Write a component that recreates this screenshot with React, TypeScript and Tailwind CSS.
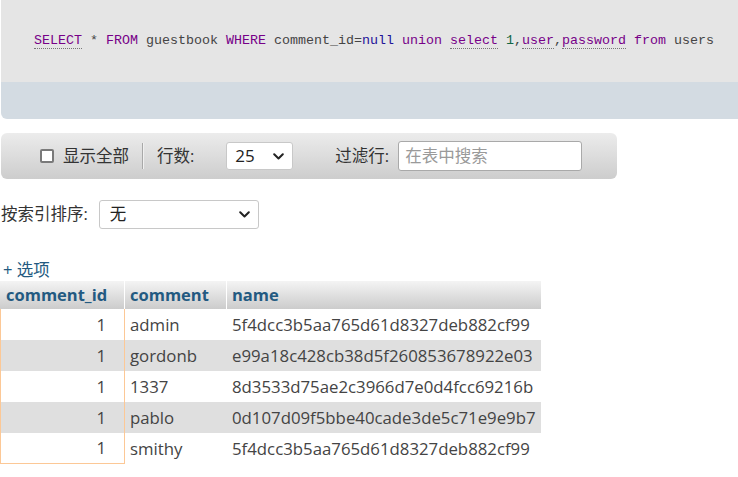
import React from "react";

const font = { fontFamily: '"Open Sans", "Noto Sans CJK SC", sans-serif' };

function Chevron() {
  return (
    <svg width="11" height="7" viewBox="0 0 11 7" fill="none">
      <path d="M1.2 1.2l4.3 4.3 4.3-4.3" stroke="#222" strokeWidth="2" strokeLinecap="round" strokeLinejoin="round" />
    </svg>
  );
}

const rows = [
  ["1", "admin", "5f4dcc3b5aa765d61d8327deb882cf99"],
  ["1", "gordonb", "e99a18c428cb38d5f260853678922e03"],
  ["1", "1337", "8d3533d75ae2c3966d7e0d4fcc69216b"],
  ["1", "pablo", "0d107d09f5bbe40cade3de5c71e9e9b7"],
  ["1", "smithy", "5f4dcc3b5aa765d61d8327deb882cf99"],
];

export default function App() {
  const kw = "text-[#770088]";
  const dot = "border-b border-dotted border-[#777]";
  return (
    <div className="w-[738px] h-[477px] overflow-hidden bg-white text-[#444]" style={font}>
      {/* SQL box */}
      <div className="ml-[1px] rounded-bl-[6px] overflow-hidden">
        <div className="h-[82px] bg-[#e5e5e5] flex items-center pl-[33px]">
          <pre className="text-[13.33px] leading-[16px] text-[#444] whitespace-pre" style={{ fontFamily: '"Liberation Mono", monospace' }}>
            <span className={`${kw} ${dot}`}>SELECT</span> * <span className={kw}>FROM</span> guestbook <span className={kw}>WHERE</span> comment_id=<span className="text-[#221199]">null</span> <span className={kw}>union</span> <span className={`${kw} ${dot}`}>select</span> <span className="text-[#116644]">1</span>,<span className={`${kw} ${dot}`}>user</span>,<span className={`${kw} ${dot}`}>password</span> <span className={kw}>from</span> users
          </pre>
        </div>
        <div className="h-[37px] bg-[#d3dbe2]" />
      </div>

      {/* Toolbar */}
      <div className="mt-[14px] ml-[1px] w-[616px] h-[46px] rounded-[6px] bg-gradient-to-b from-[#ececec] to-[#cdcdcd] flex items-center text-[16.5px] text-[#333]">
        <div className="ml-[39px] w-[14px] h-[14px] border-2 border-[#7a7a7a] rounded-[2px] bg-white" />
        <span className="ml-[9px]">显示全部</span>
        <div className="ml-[13px] w-[2px] h-[26px] bg-[#a8a8a8] border-r border-[#f0f0f0]" />
        <span className="ml-[13px]">行数:</span>
        <div className="ml-[32px] w-[67px] h-[28px] bg-white border border-[#c8c8c8] rounded-[3px] flex items-center justify-between pl-[8px] pr-[8px] text-[17px]">
          <span className="text-[#222]">25</span>
          <Chevron />
        </div>
        <span className="ml-[42px]">过滤行:</span>
        <div className="ml-[9px] w-[184px] h-[30px] bg-white border border-[#a9a9a9] rounded-[3px] flex items-center pl-[6px]">
          <span className="text-[#9a9a9a]">在表中搜索</span>
        </div>
      </div>

      {/* Sort */}
      <div className="mt-[21px] flex items-center h-[29px] text-[16.5px] text-[#333]">
        <span className="ml-[1px]">按索引排序:</span>
        <div className="ml-[11px] w-[160px] h-[29px] bg-white border border-[#c8c8c8] rounded-[3px] flex items-center justify-between pl-[10px] pr-[8px]">
          <span className="text-[#222]">无</span>
          <Chevron />
        </div>
      </div>

      {/* options */}
      <div className="mt-[31px] ml-[3px] h-[20px] leading-[20px] text-[16.5px] text-[#235a81]">+ 选项</div>

      {/* Table */}
      <div className="mt-[1px] w-[541px]">
        <div className="flex h-[28px] bg-gradient-to-b from-[#f4f4f4] to-[#cccccc] text-[16.5px] font-bold text-[#235a81]">
          <div className="w-[125px] pl-[6px] flex items-center border-r border-white">comment_id</div>
          <div className="w-[102px] pl-[5px] flex items-center border-r border-white">comment</div>
          <div className="flex-1 pl-[5px] flex items-center">name</div>
        </div>
        {rows.map((r, i) => (
          <div key={i} className={`flex h-[31px] text-[16.8px] text-[#444] ${i % 2 === 1 ? "bg-[#dfdfdf]" : "bg-white"}`}>
            <div className={`w-[125px] border-l border-r border-[#fcc896] ${i === rows.length - 1 ? "border-b" : ""} flex items-center justify-end pr-[18px]`}>{r[0]}</div>
            <div className="w-[102px] pl-[5px] flex items-center">{r[1]}</div>
            <div className="flex-1 pl-[5px] flex items-center">{r[2]}</div>
          </div>
        ))}
      </div>
    </div>
  );
}
